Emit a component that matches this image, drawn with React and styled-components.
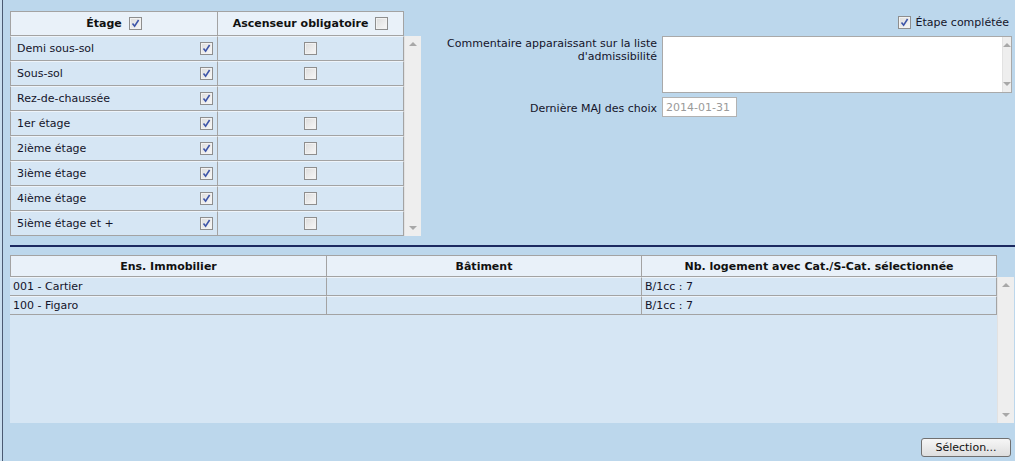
import React from "react";
import styled, { createGlobalStyle } from "styled-components";

const GlobalStyle = createGlobalStyle`
  html, body {
    margin: 0;
    padding: 0;
    background: #bcd7ec;
  }
  body {
    font-family: "DejaVu Sans", Verdana, sans-serif;
    font-size: 11px;
    color: #14142a;
  }
`;

const Page = styled.div`
  width: 1015px;
  height: 461px;
  box-sizing: border-box;
  overflow: hidden;
  box-shadow: inset 2px 0 0 #c9deef, inset 3px 0 0 #4b5a72;
`;

const TopSection = styled.div`
  display: flex;
  align-items: flex-start;
`;

const LeftPanel = styled.div`
  display: grid;
  grid-template-columns: 394px 17px;
  grid-template-rows: 25px 200px;
  margin: 11px 0 0 10px;
`;

const Grid = styled.div`
  display: grid;
  grid-template-columns: ${(p) => p.$cols};
  grid-column: ${(p) => p.$span || "auto"};
`;

const HeadCell = styled.div`
  height: ${(p) => p.$h}px;
  box-sizing: border-box;
  background: #e9f1f9;
  border: 1px solid #a3a3a3;
  border-left-width: ${(p) => (p.$first ? 1 : 0)}px;
  display: flex;
  align-items: center;
  justify-content: center;
  gap: 7px;
  font-weight: bold;
  color: #111;
`;

const Cell = styled.div`
  height: ${(p) => p.$h}px;
  box-sizing: border-box;
  background: #d6e6f4;
  border-bottom: 1px solid #a3a3a3;
  border-top: 1px solid #eef4fa;
  border-right: 1px solid #a3a3a3;
  border-left: ${(p) => (p.$first ? "1px solid #a3a3a3" : "0")};
  display: flex;
  align-items: center;
  justify-content: ${(p) => p.$justify || "flex-start"};
  padding: ${(p) => p.$pad || "0 6px"};
`;

const Scrollbar = styled.div`
  background: #eeeeee;
  border-left: 1px solid #e2e2e2;
  display: flex;
  flex-direction: column;
  justify-content: space-between;
  align-items: center;
  padding: 6px 0;
  box-sizing: border-box;
  height: ${(p) => p.$h}px;
`;

const Arrow = styled.span`
  width: 0;
  height: 0;
  border-left: 4px solid transparent;
  border-right: 4px solid transparent;
  ${(p) =>
    p.$down
      ? "border-top: 4px solid #a8a8a8;"
      : "border-bottom: 4px solid #a8a8a8;"}
`;

const RightPanel = styled.div`
  flex: 1;
  padding: 16px 3px 0 0;
`;

const CompletedRow = styled.label`
  display: flex;
  justify-content: flex-end;
  align-items: center;
  gap: 5px;
  height: 13px;
  margin-right: 3px;
`;

const Form = styled.div`
  display: grid;
  grid-template-columns: 1fr 350px;
  column-gap: 5px;
  row-gap: 4px;
  margin-top: 7px;
`;

const Label = styled.div`
  text-align: right;
  line-height: 13px;
  padding-top: ${(p) => p.$top || 1}px;
  padding-left: 20px;
`;

const TextArea = styled.div`
  height: 57px;
  box-sizing: border-box;
  background: #fff;
  border: 1px solid #a9a9a9;
  display: flex;
  justify-content: flex-end;
`;

const DateInput = styled.div`
  width: 75px;
  height: 20px;
  box-sizing: border-box;
  background: #fff;
  border: 1px solid #b2b2b2;
  color: #9a9a9a;
  display: flex;
  align-items: center;
  padding-left: 3px;
`;

const Divider = styled.div`
  height: 2px;
  background: #1c2960;
  margin: 9px 0 0 10px;
`;

const BottomTable = styled.div`
  display: grid;
  grid-template-columns: 987px 17px;
  margin: 8px 0 0 10px;
`;

const Body = styled.div`
  height: 146px;
  background: #d6e6f4;
  display: flex;
  flex-direction: column;
`;

const Footer = styled.div`
  display: flex;
  justify-content: flex-end;
  margin: 15px 4px 0 0;
`;

const Button = styled.button`
  width: 90px;
  height: 19px;
  font-family: inherit;
  font-size: 11px;
  color: #111;
  border: 1px solid #707070;
  border-radius: 3px;
  background: linear-gradient(#f6f6f6, #dedede);
  padding: 0;
`;

const Box = styled.span`
  width: 13px;
  height: 13px;
  box-sizing: border-box;
  border: 1px solid #8e8e8e;
  background: linear-gradient(135deg, #dcdcdc, #f8f8f8);
  box-shadow: inset 0 0 0 1px #f2f2f2;
  display: inline-flex;
  align-items: center;
  justify-content: center;
  flex-shrink: 0;
`;

const Check = ({ on }) => (
  <Box>
    {on && (
      <svg width="9" height="9" viewBox="0 0 9 9">
        <path d="M1.5 4.5 L3.6 7.2 L7.6 1" fill="none" stroke="#3d54a8" strokeWidth="1.6" />
      </svg>
    )}
  </Box>
);

const floors = [
  ["Demi sous-sol", true],
  ["Sous-sol", true],
  ["Rez-de-chaussée", false],
  ["1er étage", true],
  ["2ième étage", true],
  ["3ième étage", true],
  ["4ième étage", true],
  ["5ième étage et +", true],
];

const buildings = [
  ["001 - Cartier", "", "B/1cc : 7"],
  ["100 - Figaro", "", "B/1cc : 7"],
];

const App = () => {
  return (
    <Page>
      <GlobalStyle />
      <TopSection>
        <LeftPanel>
          <Grid $cols="208px 186px">
            <HeadCell $h={25} $first>
              Étage <Check on />
            </HeadCell>
            <HeadCell $h={25}>
              Ascenseur obligatoire <Check />
            </HeadCell>
          </Grid>
          <div />
          <Grid $cols="208px 186px">
            {floors.map(([name, elevator]) => (
              <React.Fragment key={name}>
                <Cell $h={25} $first $justify="space-between" $pad="0 4px 0 6px">
                  {name}
                  <Check on />
                </Cell>
                <Cell $h={25} $justify="center" $pad="0">
                  {elevator && <Check />}
                </Cell>
              </React.Fragment>
            ))}
          </Grid>
          <Scrollbar $h={200}>
            <Arrow />
            <Arrow $down />
          </Scrollbar>
        </LeftPanel>

        <RightPanel>
          <CompletedRow>
            <Check on />
            Étape complétée
          </CompletedRow>
          <Form>
            <Label>
              Commentaire apparaissant sur la liste
              <br />
              d'admissibilité
            </Label>
            <TextArea>
              <Scrollbar $h={55}>
                <Arrow />
                <Arrow $down />
              </Scrollbar>
            </TextArea>
            <Label $top={5}>Dernière MAJ des choix</Label>
            <DateInput>2014-01-31</DateInput>
          </Form>
        </RightPanel>
      </TopSection>

      <Divider />

      <BottomTable>
        <Grid $cols="317px 315px 355px">
          <HeadCell $h={22} $first>Ens. Immobilier</HeadCell>
          <HeadCell $h={22}>Bâtiment</HeadCell>
          <HeadCell $h={22}>Nb. logement avec Cat./S-Cat. sélectionnée</HeadCell>
        </Grid>
        <div />
        <Body>
          <Grid $cols="317px 315px 355px">
            {buildings.map((row) =>
              row.map((v, i) => (
                <Cell key={row[0] + i} $h={19} $pad="0 3px" $first={false}>
                  {v}
                </Cell>
              ))
            )}
          </Grid>
        </Body>
        <Scrollbar $h={146}>
          <Arrow />
          <Arrow $down />
        </Scrollbar>
      </BottomTable>

      <Footer>
        <Button>Sélection...</Button>
      </Footer>
    </Page>
  );
};

export default App;
